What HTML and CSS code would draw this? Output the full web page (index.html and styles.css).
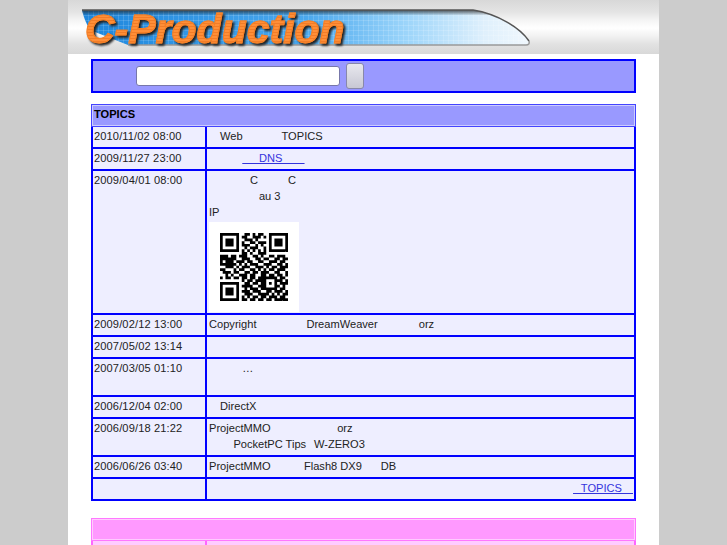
FILE: index.html
```html
<!DOCTYPE html>
<html lang="ja">
<head>
    <meta charset="UTF-8">
    <title>C-Production</title>
    <link rel="stylesheet" href="styles.css">
</head>
<body>
    <div class="wrapper">
        <div class="header">
            <svg class="banner" width="591" height="54" viewBox="0 0 591 54">
                <defs>
                    <linearGradient id="bannerFill" x1="0" x2="1" y1="0" y2="0">
                        <stop offset="0" stop-color="#1d86dc"/>
                        <stop offset="0.5" stop-color="#4aa8ee"/>
                        <stop offset="0.72" stop-color="#9ad4fa"/>
                        <stop offset="0.9" stop-color="#dff0fc"/>
                        <stop offset="1" stop-color="#f0f7fd"/>
                    </linearGradient>
                    <linearGradient id="bannerTop" x1="0" x2="0" y1="0" y2="1">
                        <stop offset="0" stop-color="#222" stop-opacity=".75"/>
                        <stop offset="0.16" stop-color="#222" stop-opacity="0"/>
                    </linearGradient>
                    <pattern id="tiles" width="5" height="5" patternUnits="userSpaceOnUse">
                        <path d="M5 0H0V5" fill="none" stroke="#fff" stroke-opacity=".28"/>
                    </pattern>
                </defs>
                <path d="M14 10H405C430 14 452 28 461 41Q462 45 458 45H60L22 30Q16 20 14 10Z" fill="url(#bannerFill)"/>
                <path d="M14 10H405C430 14 452 28 461 41Q462 45 458 45H60L22 30Q16 20 14 10Z" fill="url(#tiles)"/>
                <path d="M14 10H405C430 14 452 28 461 41Q462 45 458 45H60L22 30Q16 20 14 10Z" fill="url(#bannerTop)"/>
                <path d="M14 10H405C430 14 452 28 461 41" fill="none" stroke="#555" stroke-width="1.5"/>
                <path d="M60 45H458Q462 45 461 41" fill="none" stroke="#999" stroke-width="1.5"/>
            </svg>
            <span class="logo">C-Production</span>
        </div>

        <form class="search">
            <input class="search-text" type="text">
            <button class="search-btn" type="button"></button>
        </form>

        <table class="topics">
            <colgroup><col class="col-date"><col></colgroup>
            <tr><th colspan="2">TOPICS</th></tr>
            <tr>
                <td class="date">2010/11/02 08:00</td>
                <td>&emsp;Web&emsp;&emsp;&emsp;&ensp;TOPICS</td>
            </tr>
            <tr>
                <td class="date">2009/11/27 23:00</td>
                <td>&emsp;&emsp;&emsp;<a href="#">&emsp;&ensp;DNS&emsp;&emsp;</a></td>
            </tr>
            <tr>
                <td class="date">2009/04/01 08:00</td>
                <td class="with-qr">
                    &emsp;&emsp;&emsp;&ensp;&thinsp;C&emsp;&emsp;&ensp;&thinsp;C<br>
                    &emsp;&emsp;&emsp;&emsp;&ensp;au 3<br>
                    IP
                    <div class="qr"><svg id="qr" width="68" height="68" viewBox="0 0 25 25"></svg></div>
                </td>
            </tr>
            <tr>
                <td class="date">2009/02/12 13:00</td>
                <td>Copyright&emsp;&emsp;&emsp;&emsp;&ensp;DreamWeaver&emsp;&emsp;&emsp;&ensp;&thinsp;orz</td>
            </tr>
            <tr>
                <td class="date">2007/05/02 13:14</td>
                <td>&nbsp;</td>
            </tr>
            <tr>
                <td class="date">2007/03/05 01:10</td>
                <td>&emsp;&emsp;&emsp;…<br>&nbsp;</td>
            </tr>
            <tr>
                <td class="date">2006/12/04 02:00</td>
                <td>&emsp;DirectX</td>
            </tr>
            <tr>
                <td class="date">2006/09/18 21:22</td>
                <td>ProjectMMO&emsp;&emsp;&emsp;&emsp;&emsp;&emsp;orz<br>&emsp;&emsp;&thinsp;PocketPC Tips&ensp;&thinsp;W-ZERO3</td>
            </tr>
            <tr>
                <td class="date">2006/06/26 03:40</td>
                <td>ProjectMMO&emsp;&emsp;&emsp;Flash8 DX9&emsp;&ensp;&thinsp;DB</td>
            </tr>
            <tr>
                <td class="date">&nbsp;</td>
                <td class="more"><a href="#">&ensp;&thinsp;TOPICS&emsp;</a></td>
            </tr>
        </table>

        <table class="topics pink">
            <colgroup><col class="col-date"><col></colgroup>
            <tr><th colspan="2">&nbsp;</th></tr>
            <tr>
                <td class="date">&nbsp;</td>
                <td>&nbsp;</td>
            </tr>
        </table>
    </div>

    <script src="qr.js"></script>
</body>
</html>
```
FILE: styles.css
```css
html, body {
    margin: 0;
    padding: 0;
    height: 545px;
    overflow: hidden;
    background-color: #ccc;
}
.wrapper {
    width: 591px;
    height: 545px;
    margin-left: 68px;
    overflow: hidden;
    background-color: #fff;
    font-family: "Liberation Sans", "Noto Sans CJK JP", sans-serif;
    font-size: 11.1px;
    line-height: 16px;
    color: #222;
}
/* header */
.header {
    position: relative;
    height: 54px;
    background: linear-gradient(#d8d8d8 0, #e4e4e4 12px, #f4f4f4 20px, #fff 28px, #f2f2f2 36px, #e2e2e2 44px, #d8d8d8 54px);
}
.banner {
    display: block;
}
.logo {
    position: absolute;
    top: 6px;
    left: 17px;
    font-size: 41px;
    line-height: 46px;
    font-weight: bold;
    font-style: italic;
    color: transparent;
    -webkit-text-stroke: 1px #f58026;
    background: repeating-linear-gradient(#ff8f38 0, #ff8f38 2px, #f27c28 2px, #f27c28 3px);
    -webkit-background-clip: text;
    background-clip: text;
    filter: drop-shadow(2px 2px 1px #222);
}
/* search */
.search {
    display: flex;
    align-items: center;
    gap: 6px;
    box-sizing: border-box;
    width: 545px;
    height: 34px;
    margin: 5px 0 11px 23px;
    padding-left: 43px;
    border: 2px solid #00f;
    background-color: #99f;
}
.search-text {
    box-sizing: border-box;
    width: 204px;
    height: 20px;
    margin: 0;
    padding: 0;
    border: 1px solid #7777aa;
    border-radius: 3px;
    background-color: #fff;
}
.search-btn {
    box-sizing: border-box;
    width: 18px;
    height: 26px;
    margin: 0;
    padding: 0;
    border: 1px solid #8888aa;
    border-radius: 3px;
    background: linear-gradient(#e8e8ee, #c8c8d4);
}
/* topics */
.topics {
    width: 545px;
    margin: 0 0 17px 23px;
    border-spacing: 0;
    table-layout: fixed;
}
.col-date {
    width: 116px;
}
.topics th {
    box-sizing: border-box;
    height: 23px;
    padding: 1px 2px 0;
    border: 1px solid #4444ff;
    box-shadow: inset 0 0 0 1px #ccccff;
    background-color: #99f;
    color: #000;
    font-weight: bold;
    text-align: left;
    vertical-align: top;
}
.topics td {
    padding: 1px 2px 3px;
    border-right: 2px solid #00f;
    border-bottom: 2px solid #00f;
    background-color: #eef;
    vertical-align: top;
}
.topics td.date {
    padding-left: 1px;
    border-left: 2px solid #00f;
    letter-spacing: .12px;
}
.topics td.with-qr {
    padding-bottom: 1px;
}
.topics a {
    color: #33d;
}
.topics td.more {
    padding-right: 1px;
    text-align: right;
}
.qr {
    display: flex;
    align-items: center;
    justify-content: center;
    width: 90px;
    height: 90px;
    margin-top: 2px;
    background-color: #fff;
}
/* pink box */
.pink th {
    border-color: #ff77ff;
    background-color: #f9f;
    box-shadow: inset 0 0 0 1px #ffccff;
}
.pink td, .pink td.date {
    border-color: #ff66ff;
    background-color: #fcf;
}
```
FILE: qr.js
```js
// QR modules, one string per row
var rows = [
    "1111111001101011001111111",
    "1000001011001110101000001",
    "1011101001110100001011101",
    "1011101010011011101011101",
    "1011101011100101001011101",
    "1000001001011100101000001",
    "1111111010101010101111111",
    "0000000011010011100000000",
    "1110110111001101001101110",
    "1111110011100110110011011",
    "1011101110110011001110110",
    "1111110101011100111001101",
    "0011101011100111010110111",
    "1100010110011010101101110",
    "0111011001101101110011001",
    "0010100111011001101101101",
    "1011011011011011111110110",
    "0000000010110111100011101",
    "1111111001101101101010111",
    "1000001011110011100011010",
    "1011101001011101111110110",
    "1011101011101110011011101",
    "1011101001110011110101011",
    "1000001010101101101110110",
    "1111111011011011011011111"
];
var d = "";
for (var y = 0; y < rows.length; y++) {
    for (var x = 0; x < rows[y].length; x++) {
        if (rows[y][x] == "1") {
            d += "M" + x + " " + y + "h1v1h-1z";
        }
    }
}
var path = document.createElementNS("http://www.w3.org/2000/svg", "path");
path.setAttribute("d", d);
document.getElementById("qr").appendChild(path);
```
